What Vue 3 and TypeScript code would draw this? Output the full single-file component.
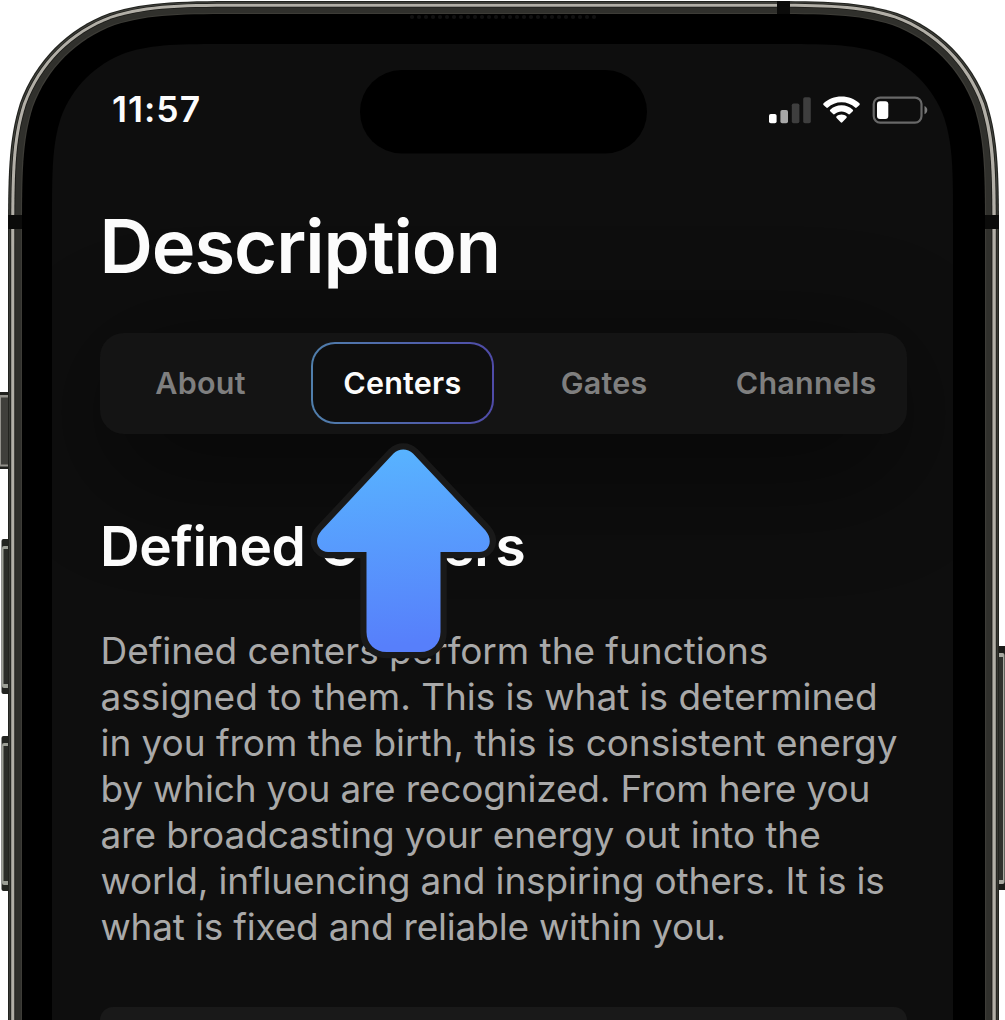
<script setup lang="ts">
interface Line {
  text: string
  spacing: number
}

const tabs = ['About', 'Centers', 'Gates', 'Channels']
const activeTab = 'Centers'

const lines: Line[] = [
  { text: 'Defined centers perform the functions', spacing: -0.04 },
  { text: 'assigned to them. This is what is determined', spacing: -0.04 },
  { text: 'in you from the birth, this is consistent energy', spacing: -0.05 },
  { text: 'by which you are recognized. From here you', spacing: -0.18 },
  { text: 'are broadcasting your energy out into the', spacing: -0.09 },
  { text: 'world, influencing and inspiring others. It is is', spacing: -0.15 },
  { text: 'what is fixed and reliable within you.', spacing: -0.2 },
]

// Continuous-curvature outline, open at the bottom edge of the view.
function outline(left: number, top: number, right: number, r: number): string {
  const bottom = 1040
  const pts: [number, number][] = [
    [0, 1.528665], [0, 1.08849296], [0, 0.86840694], [0.07491139, 0.63149379],
    [0.16905956, 0.37282383], [0.37282383, 0.16905956], [0.63149379, 0.07491139],
    [0.86840694, 0], [1.08849296, 0], [1.528665, 0],
  ]
  const l = pts.map(([x, y]) => `${left + x * r} ${top + y * r}`)
  const m = [...pts].reverse().map(([x, y]) => `${right - x * r} ${top + y * r}`)
  const curve = (p: string[]) =>
    `${p[0]} C${p[1]} ${p[2]} ${p[3]} C${p[4]} ${p[5]} ${p[6]} C${p[7]} ${p[8]} ${p[9]}`
  return `M${left} ${bottom} L${curve(l)} L${curve(m)} L${right} ${bottom} Z`
}

const shells = [
  { d: outline(8, 1, 999, 161), fill: '#22231f' },
  { d: outline(9.2, 2, 997.8, 160), fill: '#3f403b' },
  { d: outline(10.3, 3, 996.7, 159), fill: '#1d1d1a' },
  { d: outline(11.2, 3.8, 995.8, 158), fill: '#b2afa7' },
  { d: outline(14.3, 6.7, 992.4, 155), fill: '#1b1b18' },
  { d: outline(15.2, 7.4, 991.6, 154), fill: '#30302c' },
  { d: outline(20.8, 13, 986.2, 148), fill: '#3d3c37' },
  { d: outline(22, 14, 985, 147), fill: '#000' },
  { d: outline(52, 44, 953, 117), fill: '#0e0e0e' },
]

const volumeKeys = [539, 736]
const speakerDots = Array.from({ length: 27 }, (_, i) => 412 + i * 7)
</script>

<template>
  <main class="phone">
    <svg class="frame" viewBox="0 0 1005 1020" aria-hidden="true">
      <defs>
        <clipPath id="screen"><path :d="shells[8].d" /></clipPath>
        <filter id="soft" x="-50%" y="-100%" width="200%" height="300%">
          <feGaussianBlur stdDeviation="55" />
        </filter>
      </defs>
      <g>
        <rect x="-4" y="392" width="14" height="77" rx="1" fill="#20211e" />
        <rect x="-4" y="395" width="14" height="71.5" rx="1" fill="#92918b" />
        <rect x="1" y="397.5" width="8" height="67" fill="#3f3f3b" />
      </g>
      <g v-for="y in volumeKeys" :key="y">
        <rect x="1.5" :y="y" width="10" height="155" rx="2" fill="#232521" />
        <rect x="2" :y="y + 7" width="8" height="142" rx="2" fill="#9c9f96" />
        <rect x="3.5" :y="y + 10" width="6" height="135" fill="#2a2c28" />
      </g>
      <g>
        <rect x="995" y="646" width="14" height="244" fill="#1b1b18" />
        <rect x="995" y="653" width="9.5" height="231" rx="2" fill="#a9a9a1" />
        <rect x="995" y="657" width="8" height="223" fill="#30312d" />
      </g>
      <path v-for="(s, i) in shells" :key="i" :d="s.d" :fill="s.fill" />
      <g fill="#0b0b0a">
        <rect x="8" y="215" width="14" height="14" />
        <rect x="985" y="215" width="14" height="14" />
        <rect x="777" y="1" width="13" height="13" />
      </g>
      <circle v-for="x in speakerDots" :key="x" :cx="x" cy="17" r="2.1" fill="#111" />
      <g clip-path="url(#screen)">
        <rect x="100" y="340" width="807" height="145" rx="50" fill="#000" opacity=".42" filter="url(#soft)" />
      </g>
      <rect x="360" y="70" width="287" height="83.5" rx="41.75" fill="#000" />
    </svg>

    <div class="content">
      <header class="status">
        <span class="time">11:57</span>
        <div class="indicators">
          <svg width="42" height="28" viewBox="0 0 42 28">
            <rect x="0" y="18" width="7.6" height="9.2" rx="1.8" fill="#fff" />
            <rect x="11.4" y="14" width="7.6" height="13.2" rx="1.8" fill="#a8a8a8" />
            <rect x="22.8" y="7.5" width="7.6" height="19.7" rx="1.8" fill="#3e3e3e" />
            <rect x="34.2" y="1.2" width="7.6" height="26" rx="1.8" fill="#3e3e3e" />
          </svg>
          <svg class="wifi" width="37" height="28" viewBox="0 0 37 28">
            <path fill="#fff" d="M18.5 .4C25.6 .4 31.8 3 36.4 7.3C36.9 7.8 36.9 8.5 36.5 8.9L33.7 11.6C33.2 12.1 32.6 12.1 32.1 11.6C28.5 8.3 23.8 6.3 18.5 6.3S8.5 8.3 4.9 11.6C4.4 12.1 3.8 12.1 3.3 11.6L.5 8.9C.1 8.5 .1 7.8 .6 7.3C5.2 3 11.4 .4 18.5 .4Z" />
            <path fill="#fff" d="M18.5 9.3C22.9 9.3 26.9 11 29.8 13.7C30.3 14.2 30.3 14.8 29.8 15.3L26.9 18.1C26.4 18.6 25.8 18.6 25.2 18.1C23.4 16.5 21.1 15.5 18.5 15.5S13.6 16.5 11.8 18.1C11.2 18.6 10.6 18.6 10.1 18.1L7.2 15.3C6.7 14.8 6.7 14.2 7.2 13.7C10.1 11 14.1 9.3 18.5 9.3Z" />
            <path fill="#fff" d="M18.5 18.5C20.5 18.5 22.2 19.2 23.4 20.3C24 20.8 23.9 21.4 23.4 21.9L19.3 26.3C18.8 26.9 18.2 26.9 17.7 26.3L13.6 21.9C13.1 21.4 13 20.8 13.6 20.3C14.8 19.2 16.5 18.5 18.5 18.5Z" />
          </svg>
          <svg width="57" height="28" viewBox="0 0 57 28">
            <rect x="1.7" y="1.6" width="47.8" height="25" rx="6.5" fill="none" stroke="#686868" stroke-width="2.2" />
            <rect x="5" y="5.3" width="11.3" height="17.8" rx="3" fill="#fff" />
            <path d="M52.5 10V18.2C54.3 17.4 55.3 15.9 55.3 14.1S54.3 10.8 52.5 10Z" fill="#7a7a7a" />
          </svg>
        </div>
      </header>

      <h1>Description</h1>

      <nav class="tabs">
        <button v-for="tab in tabs" :key="tab" type="button" :class="{ active: tab === activeTab }">{{ tab }}</button>
      </nav>

      <h2>Defined Centers</h2>

      <p>
        <span v-for="line in lines" :key="line.text" :style="{ letterSpacing: line.spacing + 'px' }">{{ line.text }}</span>
      </p>

      <section class="card"></section>
    </div>

    <svg class="arrow" width="186" height="222" viewBox="310 440 186 222" aria-hidden="true">
      <defs>
        <linearGradient id="sky" x1="0" y1="0" x2=".08" y2="1">
          <stop offset="0" stop-color="#58b5ff" />
          <stop offset="1" stop-color="#577ffb" />
        </linearGradient>
        <path
          id="pointer"
          d="M393.5 453.5C399 448.200 407.500 448.200 413 453.500L485.500 530.500C493.500 540 489.500 552 479 552H440.500V632C440.500 644 432 652 420.500 652H386.500C375 652 366.500 644 366.500 632V552H328C317.500 552 313 540 321.500 530.500Z"
        />
      </defs>
      <use href="#pointer" fill="#191919" stroke="#191919" stroke-width="12.5" />
      <use href="#pointer" fill="url(#sky)" />
    </svg>
  </main>
</template>

<style>
body {
  margin: 0;
  background: #fff;
}
</style>

<style scoped>
.phone {
  position: relative;
  width: 1005px;
  height: 1020px;
  overflow: hidden;
  font-family: Inter, "Liberation Sans", sans-serif;
  color: #fcfcfc;
}

.frame {
  position: absolute;
  inset: 0;
  width: 1005px;
  height: 1020px;
}

.content {
  position: relative;
  display: flex;
  flex-direction: column;
  box-sizing: border-box;
  height: 1020px;
  padding: 90px 98px 0 99.5px;
}

.status {
  display: flex;
  justify-content: space-between;
  height: 40px;
  padding-left: 12.5px;
  margin-right: -22px;
}

.time {
  font-size: 35.5px;
  font-weight: 600;
  line-height: 40px;
  letter-spacing: 1px;
}

.indicators {
  display: flex;
  align-items: flex-start;
  padding-top: 5.5px;
}

.wifi {
  margin: 0 12px 0 12.5px;
}

h1 {
  margin: 71px 0 0;
  font-size: 74px;
  font-weight: 600;
  line-height: 90px;
  letter-spacing: -1.08px;
  white-space: nowrap;
}

.tabs {
  display: grid;
  grid-template-columns: repeat(4, 1fr);
  box-sizing: border-box;
  height: 101px;
  margin-top: 42px;
  padding: 9px 0 10px;
  border-radius: 24px;
  background: #141414;
}

.tabs button {
  margin: 0 9.5px;
  padding: 0 0 1px;
  border: 2.5px solid transparent;
  border-radius: 24px;
  background: none;
  color: #7f7f7f;
  font: 600 30.5px/76px Inter, "Liberation Sans", sans-serif;
  letter-spacing: 0.25px;
}

.tabs .active {
  color: #fcfcfc;
  background:
    linear-gradient(#0e0e0e, #0e0e0e) padding-box,
    linear-gradient(90deg, #507fac, #4f4ba8) border-box;
}

h2 {
  margin: 77px 0 0;
  padding-left: 0.5px;
  font-size: 55px;
  font-weight: 600;
  line-height: 70px;
  letter-spacing: -0.5px;
  white-space: nowrap;
}

p {
  display: flex;
  flex-direction: column;
  margin: 47.4px 0 0;
  padding-left: 1px;
  color: #a9a9a9;
  font-size: 37px;
  line-height: 45.9px;
  white-space: nowrap;
}

.card {
  flex: 1;
  margin-top: 57.3px;
  border-radius: 26px 26px 0 0;
  background: #191919;
}

.arrow {
  position: absolute;
  left: 310px;
  top: 440px;
}
</style>
